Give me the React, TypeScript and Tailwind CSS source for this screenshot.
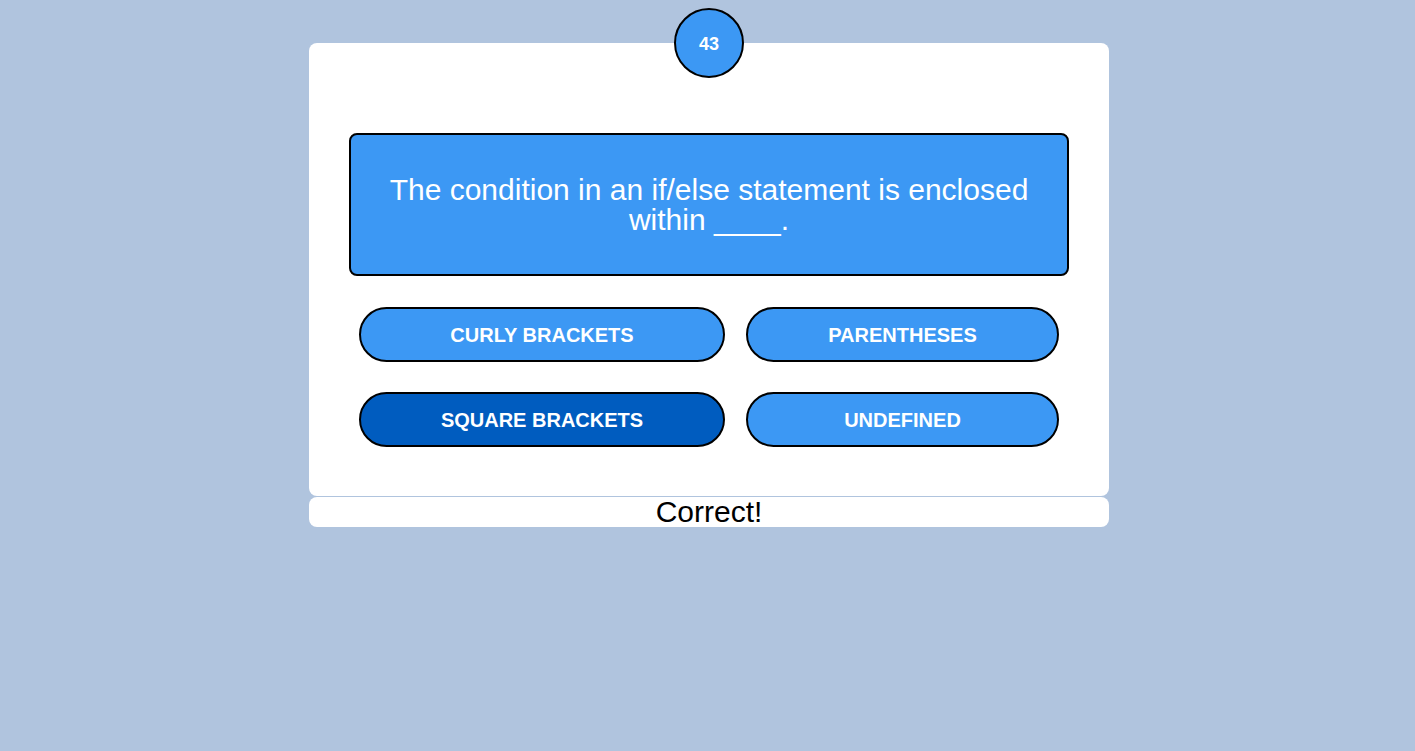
const answers = [
  { label: "Curly Brackets", picked: false },
  { label: "Parentheses", picked: false },
  { label: "Square Brackets", picked: true },
  { label: "Undefined", picked: false },
];

export default function App() {
  return (
    <div
      className="min-h-[751px] w-full bg-[#b0c4de] pl-[3px] pt-[43px]"
      style={{ fontFamily: '"Liberation Sans", Arial, sans-serif' }}
    >
      <div className="mx-auto w-[800px]">
        {/* Quiz card */}
        <div className="relative rounded-lg bg-white px-10 pt-[90px] pb-[49px]">
          <div className="absolute left-1/2 top-[-35px] flex h-[70px] w-[70px] -translate-x-1/2 items-center justify-center rounded-full border-2 border-black bg-[#3c98f4] pt-[2px] text-lg font-bold text-white">
            43
          </div>

          <div className="flex h-[143px] items-center justify-center rounded-lg border-2 border-black bg-[#3c98f4] px-8 text-center text-[30px] leading-[30px] text-white">
            The condition in an if/else statement is enclosed within ____.
          </div>

          <div className="mt-[31px] grid grid-cols-[366px_313px] gap-x-[21px] gap-y-[30px] px-[10px]">
            {answers.map((a) => (
              <button
                key={a.label}
                className={`h-[55px] rounded-full border-2 border-black text-[20px] font-bold uppercase text-white ${
                  a.picked ? "bg-[#005cbf]" : "bg-[#3c98f4]"
                }`}
              >
                {a.label}
              </button>
            ))}
          </div>
        </div>

        {/* Feedback */}
        <div className="mt-px flex h-[30px] items-center justify-center rounded-lg bg-white text-[30px] leading-[30px] text-black">
          Correct!
        </div>
      </div>
    </div>
  );
}
